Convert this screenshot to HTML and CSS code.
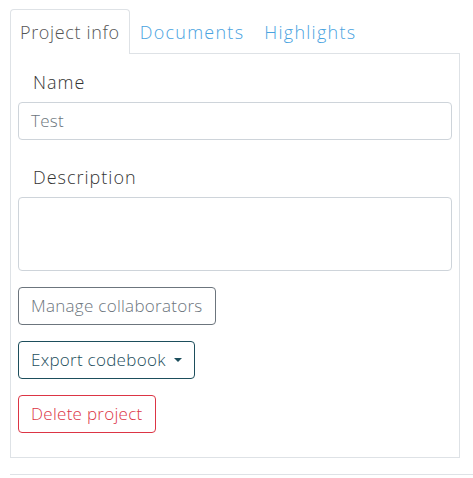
FILE: index.html
```html
<!DOCTYPE html>
<html>
<head>
<meta charset="utf-8">
<link rel="stylesheet" href="styles.css">
</head>
<body>
<div class="page">
  <div class="tabs">
    <div class="tab active">Project info</div>
    <div class="tab">Documents</div>
    <div class="tab">Highlights</div>
  </div>
  <div class="panel">
    <label class="label">Name</label>
    <div class="input">Test</div>
    <label class="label desc">Description</label>
    <div class="textarea"></div>
    <div class="btn btn-gray">Manage collaborators</div>
    <div class="btn btn-teal">Export codebook <span class="caret"></span></div>
    <div class="btn btn-red">Delete project</div>
  </div>
  <div class="rule"></div>
</div>
</body>
</html>
```
FILE: styles.css
```css
html, body {
  margin: 0;
  padding: 0;
  background: #fff;
}
body {
  font-family: "Open Sans", "DejaVu Sans", sans-serif;
  font-size: 17px;
  font-weight: 300;
  color: #333;
}
.page {
  padding: 9px 0 0 10px;
}
.tabs {
  display: flex;
  width: 450px;
  border-bottom: 1px solid #dee2e6;
  height: 44px;
}
.tab {
  padding: 0 9px;
  line-height: 44px;
  font-size: 18px;
  letter-spacing: 1.25px;
  color: #4aa3df;
  border: 1px solid transparent;
  border-bottom: none;
  border-radius: 4px 4px 0 0;
}
.tab.active {
  color: #555;
  border-color: #dee2e6;
  background: #fff;
  height: 44px;
  margin-bottom: -1px;
  letter-spacing: 0.65px;
}
.panel {
  width: 434px;
  border: 1px solid #dee2e6;
  border-top: none;
  padding: 15px 7px 24px 7px;
  display: flex;
  flex-direction: column;
  align-items: flex-start;
}
.label {
  display: block;
  padding-left: 15px;
  line-height: 26px;
  font-size: 18px;
  letter-spacing: 1px;
  color: #333;
  margin-bottom: 7px;
}
.label.desc {
  margin-top: 24px;
}
.input, .textarea {
  box-sizing: border-box;
  width: 434px;
  border: 1px solid #ced4da;
  border-radius: 4px;
}
.input {
  height: 38px;
  line-height: 36px;
  padding: 0 12px;
  color: #6c757d;
  letter-spacing: 0.3px;
}
.textarea {
  height: 74px;
  margin-bottom: 16px;
}
.btn {
  box-sizing: border-box;
  height: 38px;
  line-height: 36px;
  padding: 0 12px;
  border: 1px solid;
  border-radius: 4px;
  margin-bottom: 16px;
  display: flex;
  align-items: center;
  white-space: nowrap;
  letter-spacing: 0.28px;
}
.btn-red { margin-bottom: 0; }
.btn-gray {
  color: #6c757d;
  border-color: #6c757d;
}
.btn-teal {
  color: #1d4e5c;
  border-color: #1d4e5c;
}
.btn-red {
  color: #dc3545;
  border-color: #dc3545;
}
.caret {
  display: inline-block;
  width: 0;
  height: 0;
  margin-left: 8px;
  border-left: 4px solid transparent;
  border-right: 4px solid transparent;
  border-top: 4px solid #1d4e5c;
}
.rule {
  margin-top: 16px;
  width: 463px;
  border-top: 1px solid #dee2e6;
}
```
